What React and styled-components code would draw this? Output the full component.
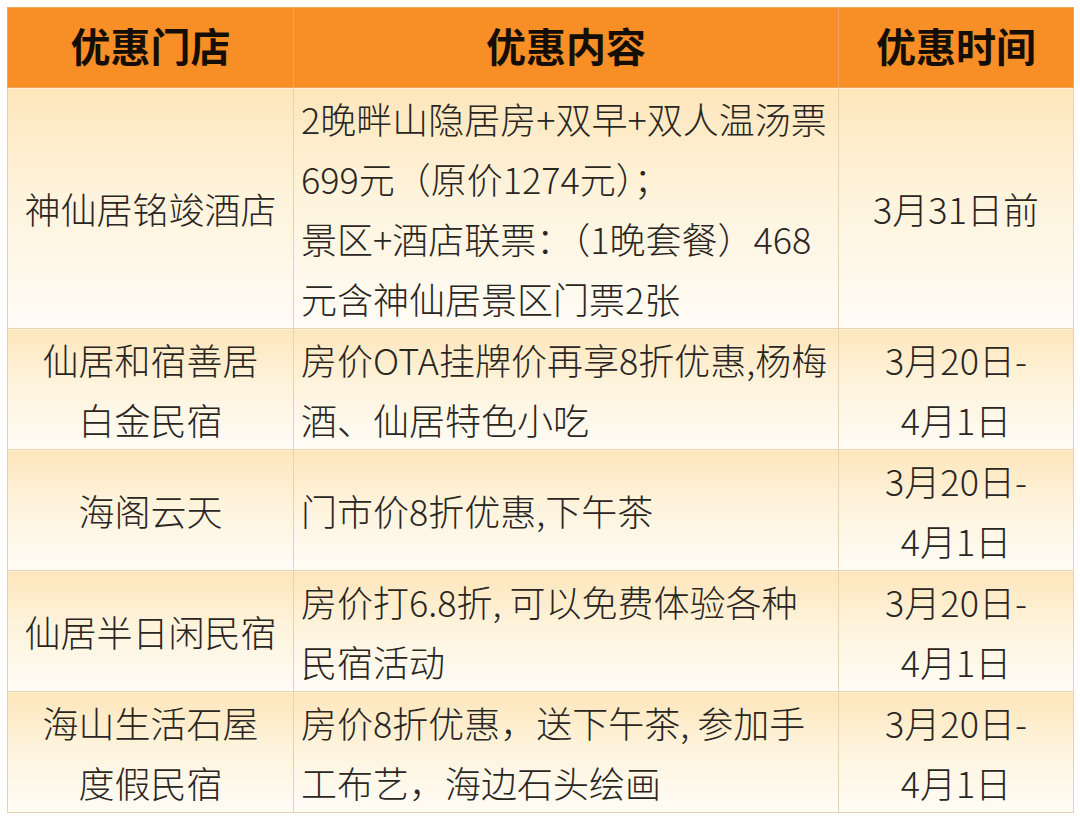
import React from "react";
import styled, { createGlobalStyle } from "styled-components";

const Global = createGlobalStyle`
  html, body { margin: 0; padding: 0; background: #ffffff; }
  body { font-family: "Noto Sans CJK SC", "Noto Sans", sans-serif; }
`;

const Page = styled.div`
  padding: 7px 0 0 7px;
`;

const Table = styled.table`
  border-collapse: collapse;
  table-layout: fixed;
  width: 1066px;
  font-family: "Noto Sans CJK SC", "Noto Sans", sans-serif;
`;

const HeadCell = styled.th`
  background: #f78e26;
  color: #150e06;
  font-size: 40px;
  font-weight: 700;
  height: 73px;
  padding: 0 0 6px 0;
  text-align: center;
  vertical-align: middle;
  border: 1px solid #f0a55a;
  line-height: 1;
`;

const Cell = styled.td`
  background: linear-gradient(180deg, #fde6bb 0%, #fef3dc 45%, #fffcf6 100%);
  border: 1px solid #e8d3ad;
  color: #2a2622;
  font-size: 36px;
  font-weight: 300;
  line-height: 60px;
  padding: ${(p) => (p.$align === "left" ? "0 0 0 7px" : "0")};
  text-align: ${(p) => p.$align || "center"};
  vertical-align: middle;
  white-space: nowrap;
  overflow: hidden;
`;

const Line = styled.div``;

const rows = [
  {
    store: ["神仙居铭竣酒店"],
    content: [
      "2晚畔山隐居房+双早+双人温汤票",
      "699元（原价1274元）；",
      "景区+酒店联票：（1晚套餐）468",
      "元含神仙居景区门票2张",
    ],
    time: ["3月31日前"],
  },
  {
    store: ["仙居和宿善居", "白金民宿"],
    content: ["房价OTA挂牌价再享8折优惠,杨梅", "酒、仙居特色小吃"],
    time: ["3月20日-", "4月1日"],
  },
  {
    store: ["海阁云天"],
    content: ["门市价8折优惠,下午茶"],
    time: ["3月20日-", "4月1日"],
  },
  {
    store: ["仙居半日闲民宿"],
    content: ["房价打6.8折, 可以免费体验各种", "民宿活动"],
    time: ["3月20日-", "4月1日"],
  },
  {
    store: ["海山生活石屋", "度假民宿"],
    content: ["房价8折优惠，送下午茶, 参加手", "工布艺，海边石头绘画"],
    time: ["3月20日-", "4月1日"],
  },
];

const Lines = ({ items }) => items.map((t, i) => <Line key={i}>{t}</Line>);

export default function App() {
  return (
    <>
      <Global />
      <Page>
        <Table>
          <colgroup>
            <col style={{ width: 286 }} />
            <col style={{ width: 545 }} />
            <col style={{ width: 235 }} />
          </colgroup>
          <thead>
            <tr>
              <HeadCell>优惠门店</HeadCell>
              <HeadCell>优惠内容</HeadCell>
              <HeadCell>优惠时间</HeadCell>
            </tr>
          </thead>
          <tbody>
            {rows.map((r, i) => (
              <tr key={i}>
                <Cell>
                  <Lines items={r.store} />
                </Cell>
                <Cell $align="left">
                  <Lines items={r.content} />
                </Cell>
                <Cell>
                  <Lines items={r.time} />
                </Cell>
              </tr>
            ))}
          </tbody>
        </Table>
      </Page>
    </>
  );
}
